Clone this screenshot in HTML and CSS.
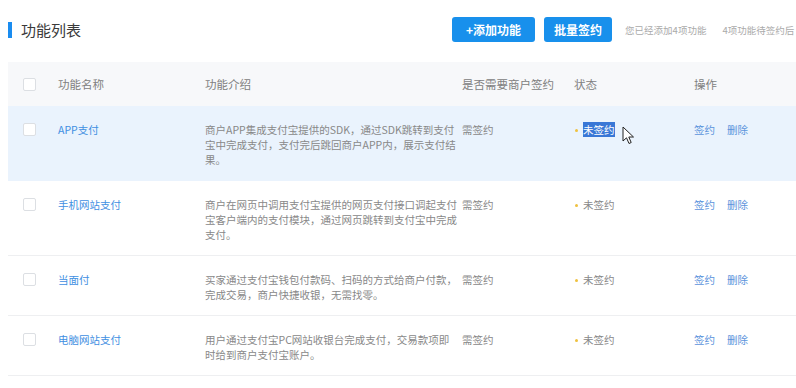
FILE: index.html
```html
<!DOCTYPE html>
<html>
<head>
    <title>功能列表</title>
    <link rel="stylesheet" href="styles.css">
</head>
<body>
    <div class="page">
        <div class="head">
            <div class="title"><span class="bar"></span>功能列表</div>
            <button class="btn btn-add">+添加功能</button>
            <button class="btn btn-sign">批量签约</button>
            <div class="note"><span>您已经添加4项功能</span><span class="note-more">4项功能待签约后</span></div>
        </div>
        <table class="list">
            <colgroup>
                <col class="c-check">
                <col class="c-name">
                <col class="c-desc">
                <col class="c-sign">
                <col class="c-state">
                <col class="c-ops">
            </colgroup>
            <thead>
                <tr>
                    <th><span class="check"></span></th>
                    <th>功能名称</th>
                    <th>功能介绍</th>
                    <th>是否需要商户签约</th>
                    <th>状态</th>
                    <th>操作</th>
                </tr>
            </thead>
            <tbody>
                <tr class="active">
                    <td><span class="check"></span></td>
                    <td><a class="link">APP支付</a></td>
                    <td>商户APP集成支付宝提供的SDK，通过SDK跳转到支付宝中完成支付，支付完后跳回商户APP内，展示支付结果。</td>
                    <td>需签约</td>
                    <td class="state"><span class="dot"></span><span class="picked">未签约</span></td>
                    <td><a class="link op">签约</a><a class="link op">删除</a></td>
                </tr>
                <tr>
                    <td><span class="check"></span></td>
                    <td><a class="link">手机网站支付</a></td>
                    <td>商户在网页中调用支付宝提供的网页支付接口调起支付宝客户端内的支付模块，通过网页跳转到支付宝中完成支付。</td>
                    <td>需签约</td>
                    <td class="state"><span class="dot"></span>未签约</td>
                    <td><a class="link op">签约</a><a class="link op">删除</a></td>
                </tr>
                <tr>
                    <td><span class="check"></span></td>
                    <td><a class="link">当面付</a></td>
                    <td>买家通过支付宝钱包付款码、扫码的方式给商户付款，完成交易，商户快捷收银，无需找零。</td>
                    <td>需签约</td>
                    <td class="state"><span class="dot"></span>未签约</td>
                    <td><a class="link op">签约</a><a class="link op">删除</a></td>
                </tr>
                <tr>
                    <td><span class="check"></span></td>
                    <td><a class="link">电脑网站支付</a></td>
                    <td>用户通过支付宝PC网站收银台完成支付，交易款项即时给到商户支付宝账户。</td>
                    <td>需签约</td>
                    <td class="state"><span class="dot"></span>未签约</td>
                    <td><a class="link op">签约</a><a class="link op">删除</a></td>
                </tr>
            </tbody>
        </table>
    </div>
    <svg class="cursor" width="13" height="20" viewBox="0 0 13 20">
        <path d="M1 1 L1 15 L4.5 11.8 L7 17.5 L9.2 16.5 L6.8 11 L11.5 11 Z" fill="#fff" stroke="#222" stroke-width="1" stroke-linejoin="round"/>
    </svg>
</body>
</html>
```
FILE: styles.css
```css
body {
    margin: 0;
    overflow: hidden;
    background: #fff;
    font-family: "Noto Sans CJK SC", "Liberation Sans", sans-serif;
    color: #888;
}
.page {
    width: 900px;
    padding-left: 8px;
}
.head {
    display: flex;
    align-items: center;
    height: 25px;
    padding-top: 17px;
    margin-bottom: 20px;
}
.title {
    width: 444px;
    display: flex;
    align-items: center;
    font-size: 15px;
    color: #3a3a3a;
}
.bar {
    width: 4px;
    height: 16px;
    background: #1a8cf0;
    margin-right: 9px;
}
.btn {
    height: 25px;
    margin-right: 9px;
    border: none;
    border-radius: 3px;
    background: #1890ec;
    color: #fff;
    font-family: inherit;
    font-size: 12px;
    font-weight: bold;
}
.btn-add {
    padding: 0 14px;
}
.btn-sign {
    padding: 0 10px;
    margin-right: 13px;
}
.note {
    font-size: 9.5px;
    color: #aaa;
    white-space: nowrap;
}
.note-more {
    margin-left: 16px;
}
.list {
    width: 886px;
    table-layout: fixed;
    border-collapse: collapse;
}
.c-check { width: 50px; }
.c-name { width: 147px; }
.c-desc { width: 257px; }
.c-sign { width: 112px; }
.c-state { width: 120px; }
.c-ops { width: 200px; }
th {
    height: 44px;
    padding: 0;
    background: #f7f8fa;
    text-align: left;
    font-weight: normal;
    font-size: 11.5px;
    color: #808080;
}
th:first-child, td:first-child {
    padding-left: 15px;
}
td {
    padding: 16px 0 13px;
    vertical-align: top;
    font-size: 10.5px;
    line-height: 15px;
    border-bottom: 1px solid #eeeff1;
}
td:nth-child(3) {
    padding-right: 4px;
}
.active td {
    background: #eaf3fd;
    border-bottom-color: #eaf3fd;
}
.check {
    display: block;
    width: 11px;
    height: 11px;
    border: 1px solid #dcdfe3;
    border-radius: 2px;
    background: #fff;
    margin-top: 1px;
}
th .check {
    margin-top: 0;
}
.link {
    color: #3f8fe2;
}
.op {
    color: #5b93dc;
    margin-right: 12px;
}
.dot {
    display: inline-block;
    width: 3px;
    height: 3px;
    border-radius: 50%;
    background: #efc13f;
    margin: 0 5px 2px 1px;
    vertical-align: middle;
}
.picked {
    background: #3977d6;
    color: #fff;
}
.cursor {
    position: absolute;
    left: 622px;
    top: 126px;
}
```
